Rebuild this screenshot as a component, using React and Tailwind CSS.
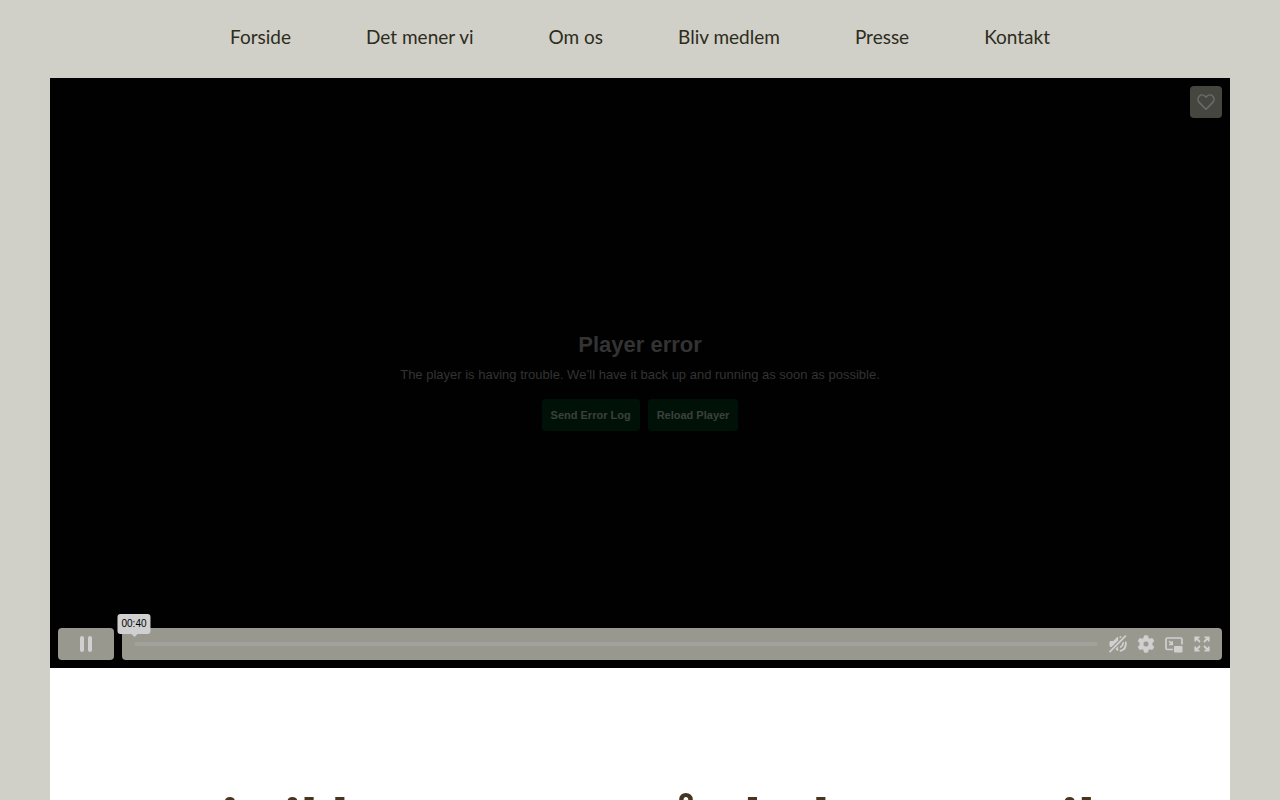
const links = ['Forside', 'Det mener vi', 'Om os', 'Bliv medlem', 'Presse', 'Kontakt']

function HeartIcon() {
  return (
    <svg viewBox="0 0 20 20" className="h-5 w-5" fill="none" stroke="currentColor" strokeWidth="1.500" strokeLinejoin="round">
      <path d="M10 17.200 3.200 10.400C1.600 8.600 1.600 5.900 3.200 4.200c1.700-1.700 4.300-1.600 5.900 0l.9.900.9-.9c1.600-1.600 4.200-1.700 5.900 0 1.600 1.700 1.600 4.400 0 6.200z" />
    </svg>
  )
}

function MutedIcon() {
  return (
    <svg viewBox="0 0 20 20" className="h-5 w-5" fill="none" stroke="currentColor" strokeWidth="1.800" strokeLinecap="round">
      <path d="M1.500 8.800c0-1.300.6-1.800 2-1.800h1.800L9 3.200c.6-.6 1.200-.3 1.200.5V16c0 .9-.7 1.200-1.300.6L5.300 13H3.500c-1.400 0-2-.5-2-1.800z" fill="currentColor" stroke="none" />
      <path d="M12.300 3.100c.5.100.9.300 1.200.500M12.600 13c1.400-.6 2.300-1.700 2.500-4M12.400 16.800c3.600-.8 5.800-4 5.400-8.300" />
      <path d="M2 17.600 17.400 2.200" stroke="#98988f" strokeWidth="4.200" />
      <path d="M2 17.600 17.400 2.200" />
    </svg>
  )
}

function GearIcon() {
  return (
    <svg viewBox="0 0 20 20" className="h-5 w-5" fill="currentColor">
      <path fillRule="evenodd" d="M8 2.200c.1-.5.400-.7.900-.7h2.200c.5 0 .8.200.9.700l.4 1.900 1.300.8 1.900-.6c.5-.2.800 0 1.100.4l1.100 1.900c.2.400.2.800-.2 1.100l-1.400 1.300v2l1.400 1.300c.4.300.4.700.2 1.100l-1.100 1.900c-.3.400-.6.600-1.100.4l-1.900-.6-1.300.8-.4 1.900c-.1.500-.4.700-.9.700H8.900c-.5 0-.8-.2-.9-.7l-.4-1.900-1.300-.8-1.900.6c-.5.200-.8 0-1.100-.4l-1.100-1.900c-.2-.4-.2-.8.200-1.100L3.800 11V9L2.400 7.700c-.4-.3-.4-.7-.2-1.100l1.100-1.900c.3-.4.600-.6 1.100-.4l1.900.6 1.300-.8zM10 7.300a2.700 2.700 0 1 0 0 5.400 2.700 2.700 0 0 0 0-5.400z" stroke="currentColor" strokeWidth=".4" />
    </svg>
  )
}

function PipIcon() {
  return (
    <svg viewBox="0 0 20 20" className="h-5 w-5" fill="none" stroke="currentColor" strokeWidth="1.700">
      <path d="M9 15.500H3.500c-1 0-1.500-.5-1.500-1.500V5.500C2 4.500 2.500 4 3.500 4h13c1 0 1.500.5 1.500 1.500V10.500" />
      <path d="m5 7 3 3M8.300 7.200v3.300H5" strokeWidth="1.500" />
      <rect x="10" y="12" width="8.500" height="6.500" rx="1" fill="currentColor" stroke="none" />
    </svg>
  )
}

function FullscreenIcon() {
  return (
    <svg viewBox="0 0 20 20" className="h-5 w-5" fill="none" stroke="currentColor" strokeWidth="1.800">
      <path d="M3.300 7.500V3.300h4.200M3.500 3.500 8 8M12.500 3.300h4.200v4.200M16.500 3.500 12 8M3.300 12.500v4.200h4.200M3.500 16.500 8 12M12.500 16.700h4.200v-4.200M16.500 16.500 12 12" />
    </svg>
  )
}

const controls = [
  { label: 'Unmute', Icon: MutedIcon },
  { label: 'Settings', Icon: GearIcon },
  { label: 'Picture in picture', Icon: PipIcon },
  { label: 'Fullscreen', Icon: FullscreenIcon },
]

function Player() {
  return (
    <section className="relative flex aspect-[2/1] flex-col items-center justify-center bg-[#010101] pt-3.5 font-['Liberation_Sans',Arial,sans-serif]">
      <h2 className="text-[22px] leading-8 font-bold text-[#333333]">Player error</h2>
      <p className="mt-1 text-[13px] leading-5 text-[#333333]">
        The player is having trouble. We’ll have it back up and running as soon as possible.
      </p>
      <div className="mt-3.5 flex gap-2 text-[11px] font-bold text-[#3c403d]">
        <button className="h-8 rounded-sm bg-[#001208] px-[9px]">Send Error Log</button>
        <button className="h-8 rounded-sm bg-[#001208] px-[9px]">Reload Player</button>
      </div>

      <button aria-label="Like" className="absolute top-2 right-2 flex h-8 w-8 items-center justify-center rounded bg-[#464640] text-[#6c6c6a]">
        <HeartIcon />
      </button>

      <div className="absolute inset-x-2 bottom-2 flex gap-2 text-[#d0d0d0]">
        <button aria-label="Pause" className="flex h-8 w-14 items-center justify-center gap-1 rounded bg-[#98988f]">
          <span className="h-4 w-1 rounded-sm bg-[#d0d0d0]" />
          <span className="h-4 w-1 rounded-sm bg-[#d0d0d0]" />
        </button>
        <div className="flex h-8 flex-1 items-center gap-2.5 rounded bg-[#98988f] pr-2.5 pl-3">
          <div className="relative h-1 flex-1 rounded-full bg-[#a2a29c]">
            <div className="absolute bottom-3 left-0 -translate-x-1/2 rounded-[3px] bg-[#d0d0d0] px-1 text-[10px] leading-5 text-black">
              00:40
              <span className="absolute top-full left-1/2 -translate-x-1/2 border-x-3 border-t-3 border-x-transparent border-t-[#d0d0d0]" />
            </div>
          </div>
          <div className="flex gap-2">
            {controls.map(({ label, Icon }) => (
              <button key={label} aria-label={label}>
                <Icon />
              </button>
            ))}
          </div>
        </div>
      </div>
    </section>
  )
}

export default function App() {
  return (
    <div className="min-h-screen bg-[#d0d0c8] px-[50px]">
      <nav className="flex justify-center gap-[75px] pt-[22px] pb-[26px] font-['Lato',sans-serif] text-[19px] leading-[30px] text-[#2e2c1c]">
        {links.map((link) => (
          <a key={link} href="#">{link}</a>
        ))}
      </nav>
      <main className="bg-white pb-24">
        <Player />
        <h1 className="px-12 pt-[109px] text-center font-['Noto_Sans',sans-serif] text-[54px] leading-[80px] font-extrabold text-[#46361f]">
          Vi vil have mere på skoler som vil
        </h1>
      </main>
    </div>
  )
}
